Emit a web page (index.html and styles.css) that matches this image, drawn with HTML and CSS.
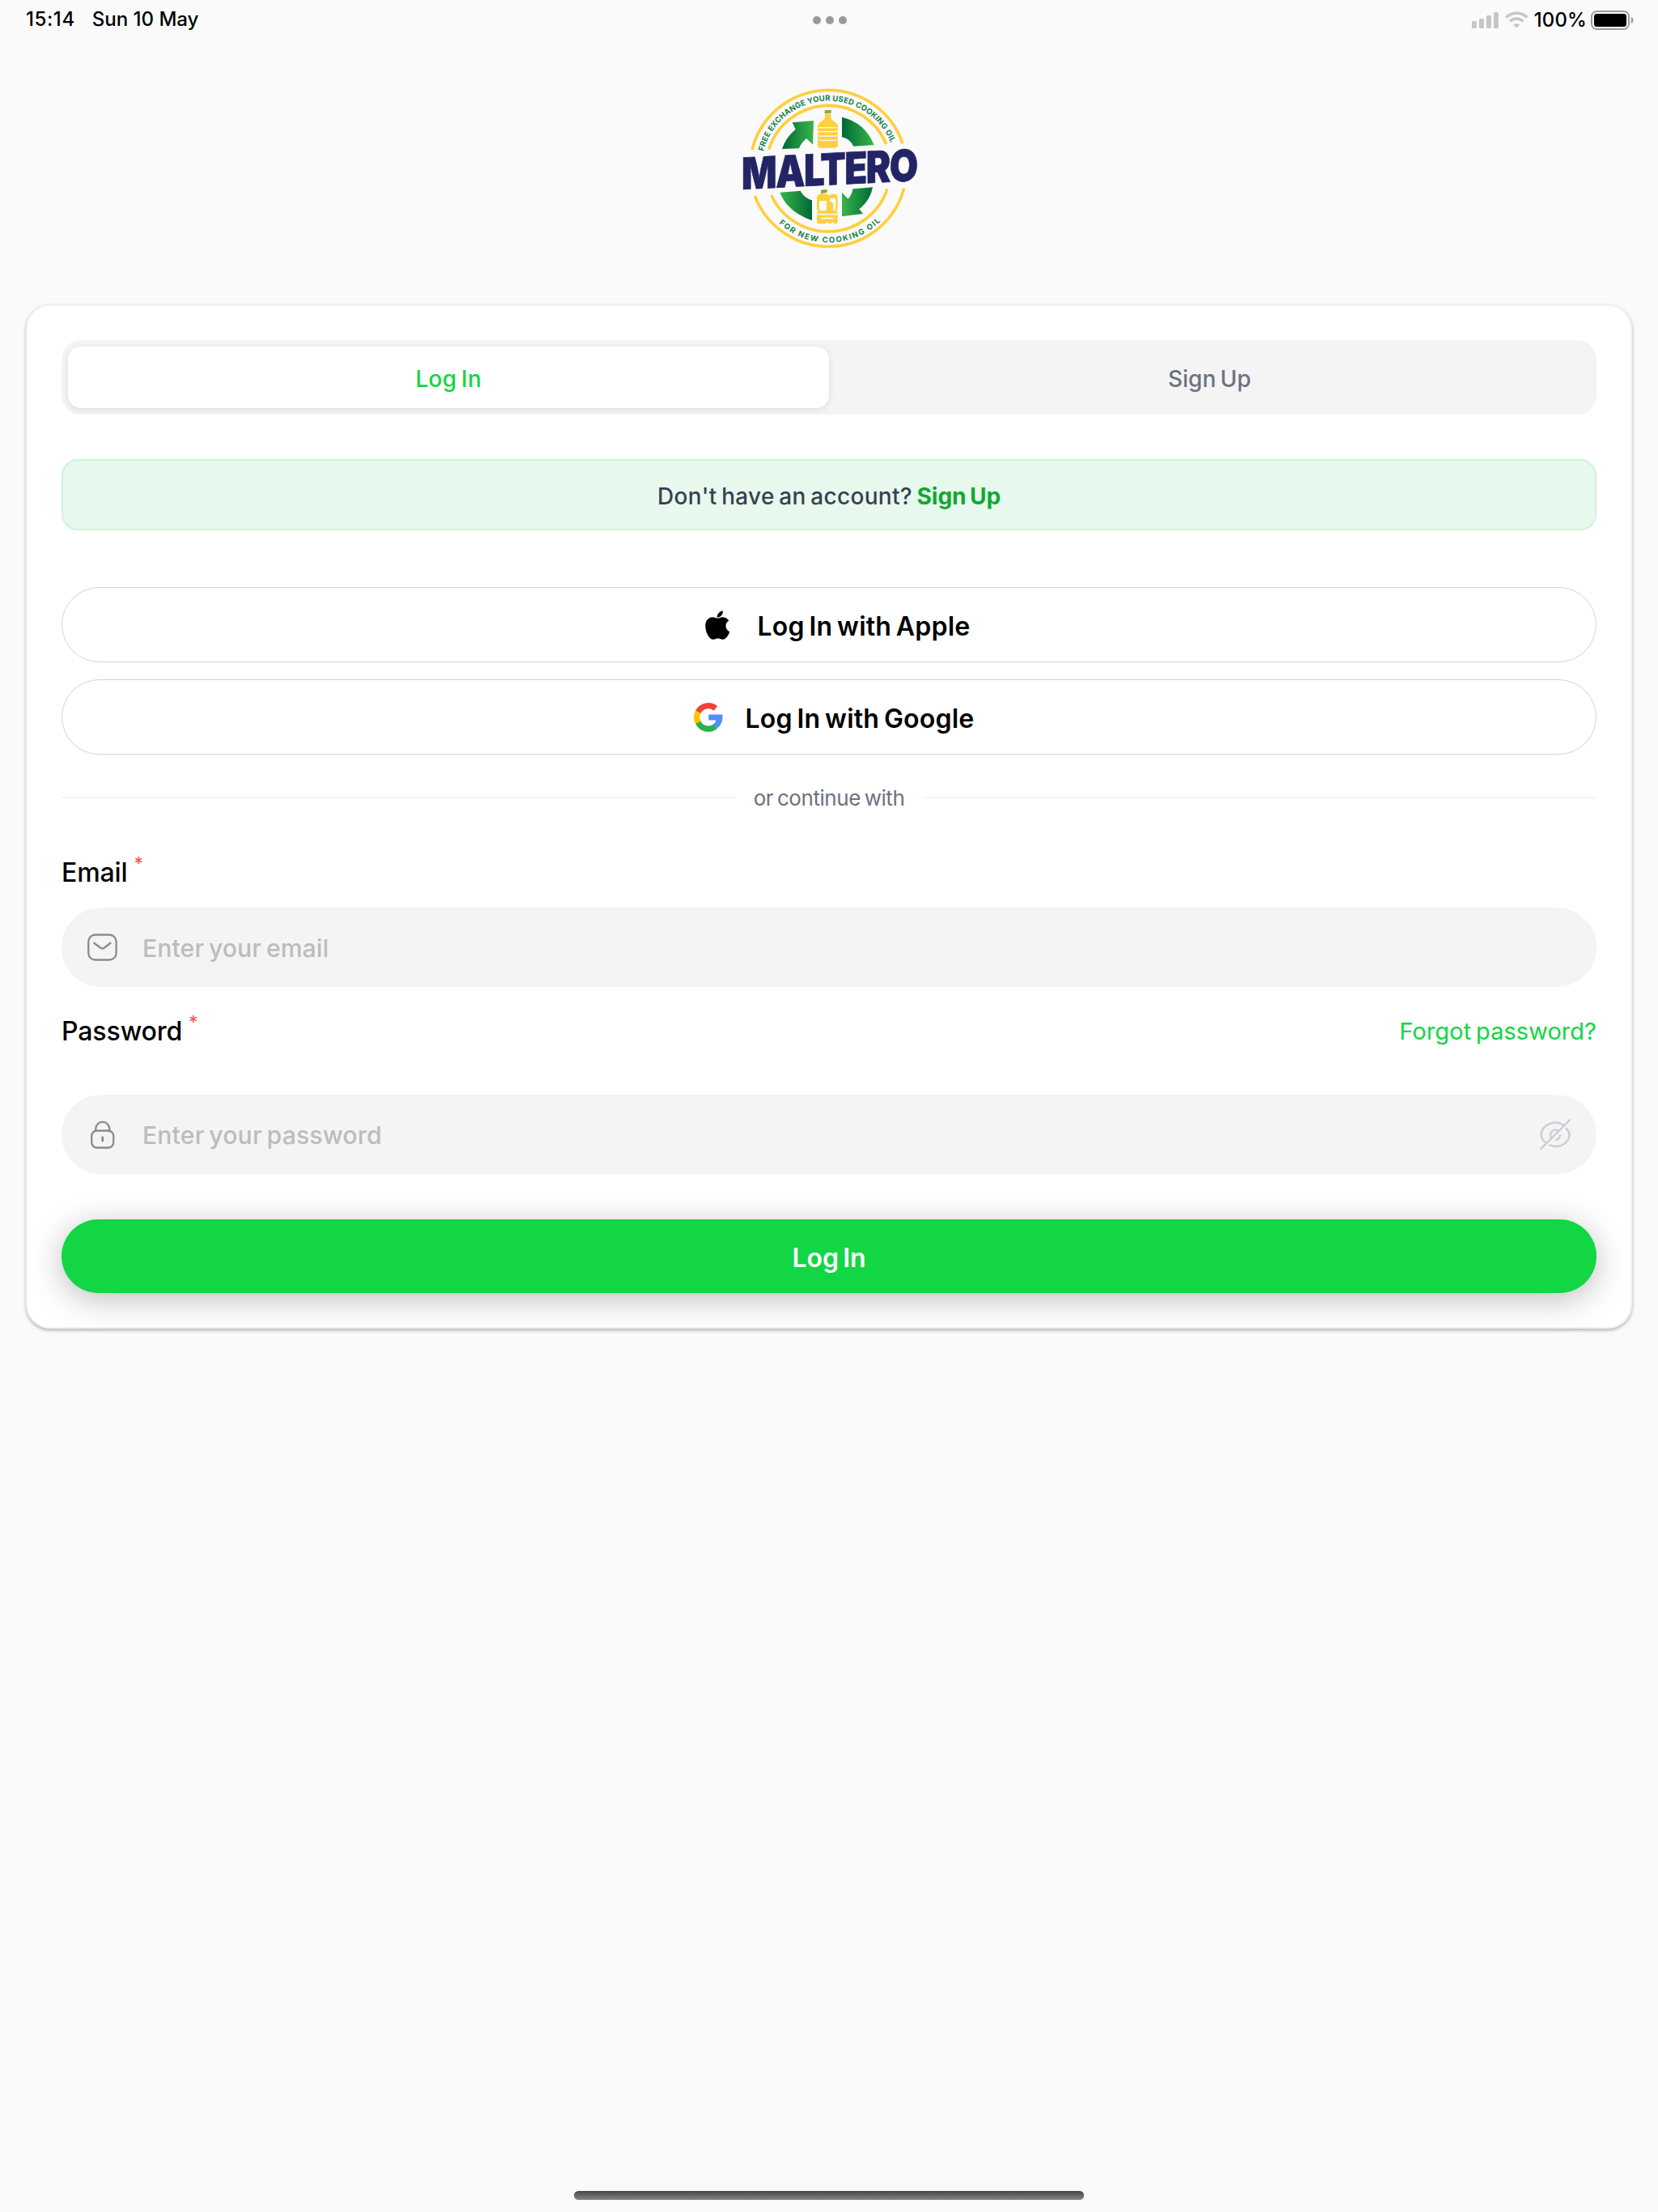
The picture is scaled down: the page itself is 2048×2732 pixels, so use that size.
FILE: index.html
```html
<!DOCTYPE html>
<html lang="en">
<head>
<meta charset="utf-8">
<title>Maltero – Log In</title>
<link rel="stylesheet" href="styles.css">
</head>
<body>
<div class="status">
  <div class="status-left"><span class="time">15:14</span><span class="date">Sun 10 May</span></div>
  <div class="dots"><i></i><i></i><i></i></div>
  <div class="status-right">
    <svg class="signal" width="70" height="46" viewBox="0 0 70 46">
      <g fill="#c6c6c6"><rect x="0" y="25" width="6" height="9" rx="1.6"/><rect x="9" y="22" width="6" height="12" rx="1.6"/><rect x="18" y="18" width="6" height="16" rx="1.6"/><rect x="27" y="14" width="6" height="20" rx="1.6"/></g>
      <g fill="none" stroke="#c6c6c6" stroke-width="3.6"><path d="M42.3 20.6a18.4 18.4 0 0 1 26 0"/><path d="M47.2 25.3a11.6 11.6 0 0 1 16.2 0"/></g>
      <path d="M51.3 29.6a5.8 5.8 0 0 1 8 0l-4 4.2z" fill="#c6c6c6"/>
    </svg>
    <span class="percent">100%</span>
    <svg width="53" height="46" viewBox="0 0 53 46">
      <rect x="1" y="13" width="46" height="22" rx="6.5" fill="none" stroke="#9b9b9b" stroke-width="2"/>
      <rect x="4" y="16" width="40" height="16" rx="3.6"/>
      <path d="M49.8 20v8c1.700-.6 2.800-2.200 2.800-4s-1.100-3.400-2.800-4z" fill="#9b9b9b"/>
    </svg>
  </div>
</div>

<header class="brand">
  <svg class="logo" width="250" height="230" viewBox="-3 0 750 690" role="img" aria-label="Maltero">
    <defs>
      <linearGradient id="rise" x1="0" x2="1"><stop offset="0" stop-color="#006837"/><stop offset="1" stop-color="#39b54a"/></linearGradient>
      <linearGradient id="fall" x1="0" x2="1"><stop offset="0" stop-color="#39b54a"/><stop offset="1" stop-color="#006837"/></linearGradient>
      <path id="arc-top" d="M129 291A249 249 0 0 1 604 267"/>
      <path id="arc-bottom" d="M186 557A274 274 0 0 0 566 547"/>
    </defs>
    <g fill="none" stroke="#ffcf3f" stroke-width="11">
      <path d="M87 285A291 291 0 0 1 645 262"/>
      <path d="M149 284A231.500 231.500 0 0 1 584 264"/>
      <path d="M97 456A291 291 0 0 0 650 428"/>
      <path d="M158 453A231.500 231.500 0 0 0 588 430"/>
    </g>
    <g class="motto">
      <text><textPath href="#arc-top" textLength="624">FREE EXCHANGE YOUR USED COOKING OIL</textPath></text>
      <text><textPath href="#arc-bottom" textLength="416">FOR NEW COOKING OIL</textPath></text>
    </g>
    <path fill="url(#rise)" d="M198 282Q211 240 248 209L236 184L315 177L312 266L289 243Q268 260 261 280Z"/>
    <path fill="url(#rise)" d="M420 164Q505 184 539 267L463 272Q450 244 420 238Z"/>
    <path fill="url(#fall)" d="M190 443L266 437Q280 463 309 472V547Q218 515 190 443Z"/>
    <path fill="url(#fall)" d="M460 430L534 424Q525 472 484 505L498 522L420 532V443L443 467Q458 450 460 430Z"/>
    <path fill="#8fa53a" d="M356 139l24-2v12l-24 2z"/>
    <path fill="#ffcf3f" d="M357 152h22v12q2 10 16 18q10 7 10 18v9q0 5-4 7q4 2 4 6v2q0 4-4 6q4 2 4 6t-4 7q4 2 4 7v18q0 10-10 10h-55q-10 0-10-10v-18q0-5 4-7q-4-2-4-7t4-6q-4-2-4-6v-2q0-4 4-6q-4-2-4-7v-9q0-11 10-18q14-8 17-18z"/>
    <path stroke="#fafafa" stroke-width="4" d="M334 203h68M334 218h68M334 234h68M334 250h68"/>
    <path fill="#8fa53a" d="M342 434l23-3v12l-23 4z"/>
    <path fill="#ffcf3f" fill-rule="evenodd" d="M342 448h24q4 3 6 8q4-7 12-7h8q12 0 12 12v44l-5 8l5 6v34q0 6-6 6h-8l-5-7l-6 7h-8l-6-7l-6 7h-22q-10 0-10-10v-30l5-6l-5-8v-42q0-10 15-15zM342 474q-6 0-6 6v25q0 6 6 6h15q6 0 6-6v-31zM381 464q-6 0-6 6v7q12 2 12 10v24q10 0 10-7v-34q0-6-6-6z"/>
    <path stroke="#fafafa" stroke-width="5" stroke-linecap="round" d="M331 524h70M344 539h44"/>
    <g transform="translate(48 432) skewY(-2.900)"><text class="wordmark" textLength="650" lengthAdjust="spacingAndGlyphs">MALTERO</text></g>
  </svg>
</header>

<main class="card">
  <nav class="tabs"><a class="tab tab-on">Log In</a><a class="tab">Sign Up</a></nav>
  <p class="notice"><span>Don't have an account? <b>Sign Up</b></span></p>

  <div class="social">
    <button class="provider apple">
      <span class="mark"><svg width="31" height="37" viewBox="0 0 31 37"><path d="M15.600 9.600c-1.800 0-4-1.500-6.500-1.400C3.500 8.400.3 12.800.3 19.200c0 7.300 4.800 16.600 9.300 16.600 2.200 0 3.300-1.400 6.300-1.400s3.800 1.400 6.200 1.400c3.700 0 6.900-5.300 8.200-9.500-3-1.400-4.800-4-4.800-7.200 0-2.900 1.500-5.200 3.800-6.600-1.700-2.700-4.500-4.200-7.600-4.300-2.400-.1-4.700 1.400-6.100 1.400zM14.800 8.600C14.500 4.500 17.800.9 22 .4c.3 4.300-3.200 8.200-7.200 8.200z"/></svg></span>
      <span>Log In with Apple</span>
    </button>
    <button class="provider google">
      <span class="mark"><svg width="35" height="36" viewBox="0 0 35 36">
        <g fill="none" stroke-width="7.200">
          <path stroke="#f44336" d="M4.300 11.600A14 14 0 0 1 25.900 7"/>
          <path stroke="#ffc107" d="M4.500 11.200A14 14 0 0 0 4.500 24.800"/>
          <path stroke="#2bb24c" d="M4.300 24.400A14 14 0 0 0 25.800 28.900"/>
        </g>
        <path fill="#518ef8" d="M17.300 14.500H34.400C35.200 20.900 33.200 27.400 28.300 31.300L22.600 27Q25.600 25.100 26.500 21.400H17.300z"/>
      </svg></span>
      <span>Log In with Google</span>
    </button>
  </div>

  <div class="divider"><span>or continue with</span></div>

  <div class="label-row"><label>Email<sup>*</sup></label></div>
  <div class="field">
    <svg width="48" height="48" viewBox="0 0 48 48" fill="none" stroke="#8b8b8b" stroke-width="2.300" stroke-linecap="round" stroke-linejoin="round"><rect x="7.200" y="8.500" width="34.400" height="31" rx="8.600"/><path d="M14.300 18.800l8 5.900q2.100 1.300 4.200 0l8-5.900"/></svg>
    <span class="placeholder mail">Enter your email</span>
  </div>

  <div class="label-row second"><label>Password<sup>*</sup></label><a class="forgot">Forgot password?</a></div>
  <div class="field">
    <svg width="48" height="48" viewBox="0 0 48 48" fill="none" stroke="#8b8b8b" stroke-width="2.300" stroke-linecap="round"><rect x="11.200" y="19.500" width="27" height="21" rx="6.500"/><path d="M16.200 19.500v-2.300a8.500 8.500 0 0 1 17 0v2.300"/><path d="M24.700 28v4" stroke-width="2.800"/></svg>
    <span class="placeholder">Enter your password</span>
    <svg class="eye" width="48" height="48" viewBox="0 0 48 48" fill="none" stroke="#c9ccd3" stroke-width="2.300" stroke-linecap="round"><path d="M5.300 42L41 6.300"/><path d="M33.200 12.600C23 5.500 10.500 11.500 6.800 19.200C4.300 24.800 6.300 30 11.200 34.200"/><path d="M36.800 16.900C42.300 22.500 41.300 28.300 37 33.200C31.500 39 23.500 40.500 16.300 37.200"/><path d="M27.200 19.700A6.500 6.500 0 0 0 18.200 28.700"/><path d="M29.200 25.300A6.500 6.500 0 0 1 24.200 30.600"/></svg>
  </div>

  <button class="submit">Log In</button>
</main>

<footer class="home"></footer>
</body>
</html>
```
FILE: styles.css
```css
* { box-sizing: border-box; }

body {
  margin: 0;
  height: 2732px;
  display: flex;
  flex-direction: column;
  background: #fafafa;
  color: #000;
  font-family: Inter, "Liberation Sans", sans-serif;
  font-weight: 500;
}

svg { display: block; flex: none; overflow: visible; }
button { font: inherit; color: inherit; margin: 0; padding: 0; background: none; border: 0; }

/* Status bar */
.status {
  flex: none;
  height: 46px;
  display: grid;
  grid-template-columns: 1fr auto 1fr;
  align-items: center;
  padding: 0 30px 0 32px;
  font-size: 24px;
  line-height: 48px;
}
.status-left { display: flex; gap: 21px; }
.time { letter-spacing: .6px; }
.date { letter-spacing: 0; }
.dots { display: flex; gap: 6px; padding-top: 2px; }
.dots i { width: 10px; height: 10px; border-radius: 50%; background: #999; }
.status-right { display: flex; justify-content: flex-end; height: 46px; }
.signal { margin-right: 7px; }
.percent { margin-right: 5px; letter-spacing: .1px; }

/* Logo */
.brand {
  flex: none;
  height: 330px;
  padding-top: 44px;
  display: flex;
  justify-content: center;
  align-items: flex-start;
}
.motto { font: 700 28.500px Inter, sans-serif; fill: #14804a; }
.wordmark {
  font: 900 162px Inter, sans-serif;
  letter-spacing: -5px;
  fill: #232466;
  stroke: #232466;
  stroke-width: 2px;
}

/* Card */
.card {
  flex: none;
  margin: 0 32px;
  padding: 42px;
  display: flex;
  flex-direction: column;
  background: #fff;
  border: 2px solid #f3f3f3;
  border-radius: 30px;
  box-shadow: 0 2px 4px rgba(0, 0, 0, .3);
}

.tabs {
  display: grid;
  grid-template-columns: 1fr 1fr;
  height: 92px;
  padding: 8px;
  background: #f4f4f4;
  border-radius: 24px;
}
.tab {
  display: flex;
  justify-content: center;
  padding-top: 4px;
  line-height: 72px;
  font-size: 28px;
  letter-spacing: 0;
  word-spacing: -.08em;
  color: #6b7280;
}
.tab-on {
  background: #fff;
  border-radius: 16px;
  color: #12d643;
  letter-spacing: .3px;
  box-shadow: 0 2px 8px rgba(0, 0, 0, .1);
}

.notice {
  margin: 55px 0 0;
  height: 88px;
  padding-top: 4px;
  text-align: center;
  line-height: 81px;
  font-size: 28px;
  letter-spacing: .32px;
  word-spacing: -.08em;
  color: #374151;
  background: #e7f9ed;
  border: 2px solid #d0f3da;
  border-radius: 20px;
}
.notice b { color: #10a832; letter-spacing: 0; }

.social { display: grid; gap: 21px; margin-top: 70px; }
.provider {
  height: 93px;
  display: flex;
  justify-content: center;
  align-items: center;
  gap: 14px;
  border: 1px solid #d3d3d3;
  border-radius: 47px;
  font-size: 32px;
  font-weight: 600;
  line-height: 91px;
  letter-spacing: .22px;
  word-spacing: -.08em;
}
.provider > span { padding-top: 4px; }
.provider > .mark { display: flex; justify-content: center; width: 72px; padding: 1px 0 0 2px; }
.google > .mark { width: 62px; padding: 0; }

.divider {
  display: flex;
  align-items: center;
  gap: 22px;
  height: 32px;
  margin-top: 37px;
  font-size: 26px;
  font-weight: 400;
  letter-spacing: -.45px;
  word-spacing: -.08em;
  color: #6b7280;
}
.divider span { padding-top: 1px; }
.divider::before, .divider::after { content: ""; flex: 1; height: 2px; background: #f3f4f5; }

/* Form */
.label-row {
  display: flex;
  justify-content: space-between;
  margin: 56px 0 24px;
  height: 40px;
  line-height: 42px;
  font-size: 32px;
  letter-spacing: -.1px;
}
.label-row.second { margin: 34px 0 59px; }
.label-row sup {
  margin-left: 8px;
  font-size: 22px;
  line-height: 0;
  vertical-align: 15px;
  color: #f8575a;
}
.forgot {
  font-size: 29px;
  font-weight: 400;
  letter-spacing: .04px;
  word-spacing: -.08em;
  color: #12d643;
}

.field {
  display: flex;
  align-items: center;
  gap: 26px;
  height: 98px;
  padding: 0 26px;
  background: #f4f4f4;
  border-radius: 49px;
}
.placeholder {
  padding-top: 1px;
  font-size: 30px;
  letter-spacing: .24px;
  word-spacing: -.08em;
  color: #bcbcbc;
}
.mail { letter-spacing: .18px; }
.eye { margin-left: auto; }

.submit {
  height: 91px;
  margin-top: 56px;
  padding-top: 4px;
  border-radius: 46px;
  background: #12d643;
  color: #fff;
  font-size: 32px;
  font-weight: 600;
  line-height: 87px;
  letter-spacing: -.1px;
  word-spacing: -.08em;
  box-shadow: 0 8px 40px rgba(0, 0, 0, .26);
}

/* Home indicator */
.home {
  width: 630px;
  height: 11px;
  margin: auto auto 15px;
  border-radius: 6px;
  background: linear-gradient(#454545, #858585);
}
```
